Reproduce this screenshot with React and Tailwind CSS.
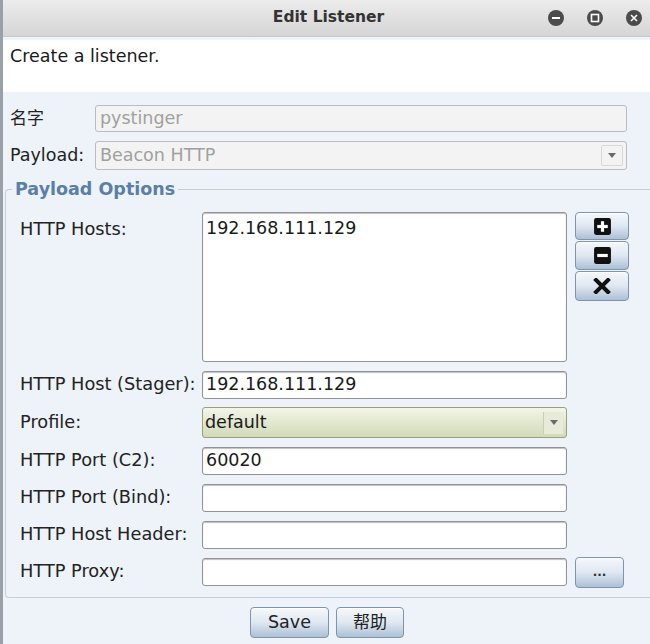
import React from "react";

const font = { fontFamily: '"DejaVu Sans", "Noto Sans CJK SC", sans-serif' };

const TitleIcon = ({ kind }) => (
  <svg width="16" height="16" viewBox="0 0 16 16">
    <circle cx="8" cy="8" r="8" fill="#4b4b4b" />
    {kind === "min" && <rect x="4" y="7" width="8" height="2" fill="#fff" />}
    {kind === "max" && (
      <rect x="4.5" y="4.5" width="7" height="7" fill="none" stroke="#fff" strokeWidth="1.6" />
    )}
    {kind === "close" && (
      <path d="M5 5 L11 11 M11 5 L5 11" stroke="#fff" strokeWidth="1.6" />
    )}
  </svg>
);

const Arrow = () => (
  <svg width="8" height="5" viewBox="0 0 8 5">
    <path d="M0 0 L8 0 L4 5 Z" fill="#6b6b6b" />
  </svg>
);

const Field = ({ value }) => (
  <div className="w-[365px] h-[28px] bg-white border border-[#8f9296] rounded-[3px] shadow-[inset_0_1px_1px_rgba(0,0,0,0.25)] flex items-center px-[3px] text-[17.5px] text-[#1a1a1a] leading-none">
    {value}
  </div>
);

const Row = ({ label, children }) => (
  <div className="flex items-center h-[28px]">
    <div className="w-[182px] text-[17.75px] text-[#222] leading-none">{label}</div>
    {children}
  </div>
);

const blueBtn =
  "border border-[#7d94ab] rounded-[4px] bg-gradient-to-b from-[#f5f8fc] via-[#dfe7f1] to-[#adc0d6] shadow-[inset_0_1px_0_#fff] flex items-center justify-center";

export default function App() {
  return (
    <div className="w-[650px] h-[644px] bg-[#eef2f9] flex overflow-hidden" style={font}>
      <div className="w-[3px] bg-[#9aa0a8] shrink-0" />
      <div className="flex-1 flex flex-col">
        <div className="h-[37px] bg-gradient-to-b from-[#ececec] to-[#d5d5d5] flex items-center relative border-b border-[#c8c8c8]">
          <div className="flex-1 text-center font-bold text-[15.5px] text-[#333] pl-[4px]">Edit Listener</div>
          <div className="absolute right-[8px] top-[10px] flex gap-[23px]">
            <TitleIcon kind="min" />
            <TitleIcon kind="max" />
            <TitleIcon kind="close" />
          </div>
        </div>
        <div className="mt-[3px] h-[52px] bg-white px-[7px] pt-[3px] text-[17.5px] text-[#1a1a1a]">
          Create a listener.
        </div>

        <div className="flex flex-col gap-[9px] mt-[13px] pl-[7px] pr-[23px]">
          <div className="flex items-center h-[27px]">
            <div className="w-[85px] text-[17px] text-[#222]">名字</div>
            <div className="flex-1 h-[27px] bg-[#f3f3f3] border border-[#b9bcc0] rounded-[3px] flex items-center px-[4px] text-[17.5px] text-[#a0a0a0]">
              pystinger
            </div>
          </div>
          <div className="flex items-center h-[29px]">
            <div className="w-[85px] text-[17.5px] text-[#222]">Payload:</div>
            <div className="flex-1 h-[29px] bg-[#f3f3f3] border border-[#b9bcc0] rounded-[3px] flex items-center pl-[4px] pr-[3px] text-[17.5px] text-[#a0a0a0]">
              <span className="flex-1">Beacon HTTP</span>
              <div className="w-[22px] h-[21px] border border-[#d8d8d8] rounded-[2px] flex items-center justify-center">
                <Arrow />
              </div>
            </div>
          </div>
        </div>

        <div className="relative mt-[19px] ml-[2px] h-[409px] border-l border-t border-b border-[#c3cedb] rounded-tl-[4px] rounded-bl-[4px]">
          <div className="absolute -top-[11px] left-[6px] bg-[#eef2f9] px-[3px] font-bold text-[17.5px] text-[#5b7fa6] leading-tight">
            Payload Options
          </div>
          <div className="flex flex-col gap-[9px] pt-[22px] pl-[14px]">
            <div className="flex items-start">
              <div className="w-[182px] text-[17.75px] text-[#222] pt-[4px]">HTTP Hosts:</div>
              <div className="w-[365px] h-[150px] bg-white border border-[#8f9296] rounded-[3px] shadow-[inset_0_1px_1px_rgba(0,0,0,0.25)] px-[3px] pt-[2px] text-[17.5px] text-[#1a1a1a]">
                192.168.111.129
              </div>
              <div className="ml-[8px] flex flex-col gap-[1px]">
                <div className={`${blueBtn} w-[54px] h-[28px]`}>
                  <svg width="19" height="19" viewBox="0 0 18 18">
                    <rect x="1" y="1" width="16" height="16" rx="2" fill="#111" />
                    <rect x="7.5" y="4" width="3" height="10" fill="#fff" />
                    <rect x="4" y="7.5" width="10" height="3" fill="#fff" />
                  </svg>
                </div>
                <div className={`${blueBtn} w-[54px] h-[29px]`}>
                  <svg width="19" height="19" viewBox="0 0 18 18">
                    <rect x="1" y="1" width="16" height="16" rx="2" fill="#111" />
                    <rect x="4" y="7.5" width="10" height="3" fill="#fff" />
                  </svg>
                </div>
                <div className={`${blueBtn} w-[54px] h-[30px]`}>
                  <svg width="18" height="16" viewBox="0 0 18 16">
                    <path d="M3 2 L15 14 M15 2 L3 14" stroke="#111" strokeWidth="4" strokeLinecap="square" />
                  </svg>
                </div>
              </div>
            </div>
            <Row label="HTTP Host (Stager):">
              <Field value="192.168.111.129" />
            </Row>
            <div className="flex items-center h-[31px] -mt-[1px]">
              <div className="w-[182px] text-[17.75px] text-[#222]">Profile:</div>
              <div className="w-[365px] h-[31px] border border-[#98a17c] rounded-[3px] bg-gradient-to-b from-[#f3f5e9] via-[#e2e7cf] to-[#d3dab9] flex items-center pl-[2px] pr-[3px] text-[17.5px] text-[#1a1a1a]">
                <span className="flex-1">default</span>
                <div className="w-[20px] h-[22px] border-l border-[#c9cfb4] flex items-center justify-center bg-[#e8ebda]">
                  <Arrow />
                </div>
              </div>
            </div>
            <Row label="HTTP Port (C2):">
              <Field value="60020" />
            </Row>
            <Row label="HTTP Port (Bind):">
              <Field value="" />
            </Row>
            <Row label="HTTP Host Header:">
              <Field value="" />
            </Row>
            <Row label="HTTP Proxy:">
              <Field value="" />
              <div className={`${blueBtn} ml-[8px] w-[49px] h-[31px] text-[12px] text-[#333] font-bold`}>
                ...
              </div>
            </Row>
          </div>
        </div>

        <div className="flex justify-center gap-[7px] mt-[9px] pl-[1px]">
          <div className={`${blueBtn} w-[79px] h-[31px] text-[17.5px] text-[#222]`}>Save</div>
          <div className={`${blueBtn} w-[68px] h-[31px] text-[17px] text-[#222]`}>帮助</div>
        </div>
      </div>
    </div>
  );
}
